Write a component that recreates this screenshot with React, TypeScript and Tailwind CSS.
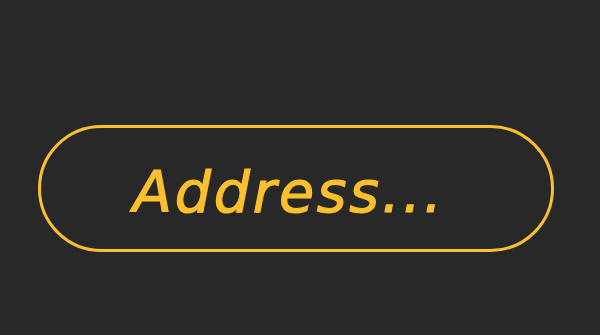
export default function App() {
  return (
    <div className="w-[600px] h-[335px] bg-[#282828] pt-[125px] pl-[38px]">
      <div className="w-[516px] h-[127px] rounded-full border-[3px] border-[#fbc02d] flex items-center justify-start pl-[92px]">
        <span
          className="text-[57px] italic text-[#fbc02d] tracking-[2.8px] leading-none pt-[8px] [-webkit-text-stroke:1.2px_#fbc02d]"
          style={{ fontFamily: '"Comic Sans MS", "DejaVu Sans", sans-serif' }}
        >
          Address...
        </span>
      </div>
    </div>
  );
}
